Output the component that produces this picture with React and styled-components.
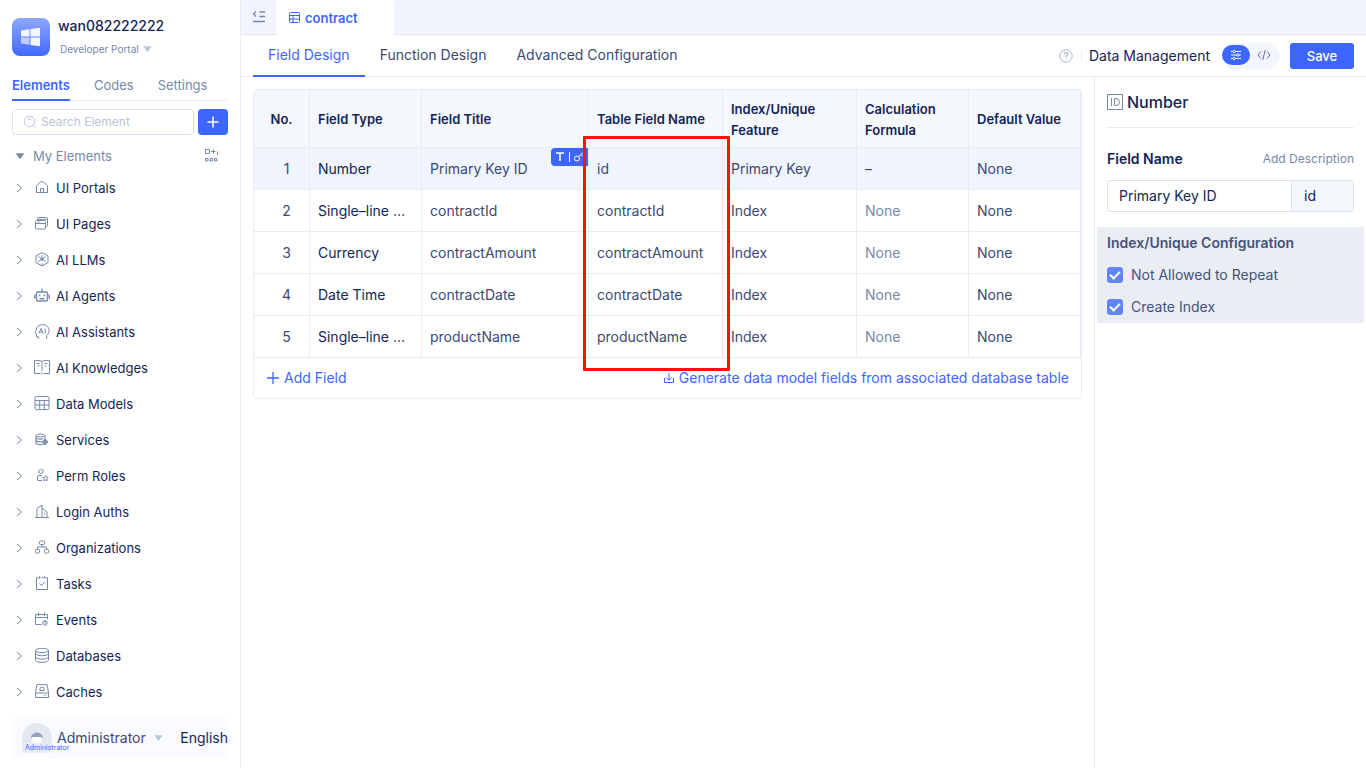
import React from "react";
import styled, { createGlobalStyle } from "styled-components";

const c = {
  brand: "#3d66ff",
  ink: "#142554",
  text: "#3b4a70",
  muted: "#7789aa",
  faint: "#b9c4d9",
  line: "#e9ecf5",
  field: "#d9e0ef",
  tint: "#f2f5fd",
};

const Global = createGlobalStyle`
  * { box-sizing: border-box; }
  body { margin: 0; background: #fff; color: ${c.ink}; font: 14px/20px Inter, "Liberation Sans", sans-serif; }
  button, input { font: inherit; color: inherit; }
  button { margin: 0; padding: 0; border: 0; background: none; }
  svg { display: block; flex: none; }
`;

const Page = styled.div`
  display: flex;
  min-height: 100vh;
`;

/* sidebar */
const Sidebar = styled.aside`
  width: 241px;
  flex: none;
  display: flex;
  flex-direction: column;
  padding: 16px 12px 10px;
  border-right: 1px solid ${c.line};
`;
const Workspace = styled.header`
  display: flex;
  gap: 8px;
  height: 54px;
`;
const Logo = styled.div`
  width: 38px;
  height: 38px;
  margin-top: 2px;
  border-radius: 8px;
  background: linear-gradient(#8fa8ff, #3f68ff);
  display: grid;
  place-items: center;
`;
const WorkspaceName = styled.h1`
  margin: 0;
  font-size: 14px;
  line-height: 20px;
  font-weight: 500;
`;
const PortalButton = styled.button`
  display: flex;
  align-items: center;
  gap: 4px;
  margin-top: 5px;
  padding-left: 2px;
  font-size: 10px;
  line-height: 16px;
  color: ${c.muted};
`;
const SideTabs = styled.nav`
  display: flex;
  gap: 24px;
  border-bottom: 1px solid ${c.line};
`;
const SideTab = styled.button`
  height: 31px;
  margin-bottom: -1px;
  font-size: 13px;
  line-height: 20px;
  padding-top: 1px;
  font-weight: ${(p) => (p.$active ? 600 : 400)};
  color: ${(p) => (p.$active ? c.brand : c.muted)};
  border-bottom: 2px solid ${(p) => (p.$active ? c.brand : "transparent")};
`;
const SearchRow = styled.div`
  display: flex;
  gap: 4px;
  margin-top: 8px;
`;
const SearchBox = styled.label`
  flex: 1;
  min-width: 0;
  height: 26px;
  display: flex;
  align-items: center;
  gap: 4px;
  padding: 0 10px;
  border: 1px solid ${c.field};
  border-radius: 4px;
  color: ${c.faint};
`;
const SearchInput = styled.input`
  min-width: 0;
  flex: 1;
  padding: 0;
  border: 0;
  outline: 0;
  font-size: 12px;
  &::placeholder { color: ${c.faint}; opacity: 1; }
`;
const AddButton = styled.button`
  width: 30px;
  height: 26px;
  border-radius: 4px;
  background: ${c.brand};
  color: #fff;
  display: grid;
  place-items: center;
`;
const GroupRow = styled.div`
  display: flex;
  align-items: center;
  justify-content: space-between;
  height: 35px;
  padding: 6px 10px 0 3px;
  color: ${c.muted};
`;
const GroupButton = styled.button`
  display: flex;
  align-items: center;
  gap: 8px;
  font-size: 13px;
`;
const ItemList = styled.ul`
  list-style: none;
  margin: 0;
  padding: 0;
  flex: 1;
`;
const Item = styled.button`
  width: 100%;
  height: 36px;
  display: flex;
  align-items: center;
  gap: 6px;
  font-size: 13px;
  & > svg { color: ${c.muted}; }
`;
const Account = styled.footer`
  display: flex;
  align-items: center;
  height: 40px;
  padding-left: 10px;
  border-radius: 4px;
  background: #fafbfe;
`;
const Avatar = styled.div`
  position: relative;
  width: 30px;
  height: 30px;
  border-radius: 50%;
  background: #e4e9f1;
  display: grid;
  place-items: center;
`;
const AvatarTag = styled.span`
  position: absolute;
  left: 0;
  bottom: 0;
  width: 30px;
  padding-left: 3px;
  border-radius: 4px;
  background: #e6ebff;
  color: ${c.brand};
  font-size: 7px;
  line-height: 10px;
`;
const AccountButton = styled.button`
  display: flex;
  align-items: center;
  gap: 8px;
  margin-left: 5px;
  color: ${c.text};
`;
const LanguageButton = styled.button`
  margin-left: auto;
`;

/* workspace area */
const Main = styled.div`
  flex: 1;
  min-width: 0;
  display: flex;
  flex-direction: column;
`;
const FileBar = styled.div`
  display: flex;
  height: 35px;
  background: ${c.tint};
  border-bottom: 1px solid #e2e7f5;
`;
const CollapseButton = styled.button`
  width: 35px;
  display: grid;
  place-items: center;
  color: ${c.muted};
`;
const FileTab = styled.button`
  width: 118px;
  height: 35px;
  display: flex;
  align-items: center;
  gap: 4px;
  padding-left: 12px;
  border-radius: 4px 4px 0 0;
  background: #fff;
  color: ${c.brand};
  font-size: 13px;
  font-weight: 600;
`;
const ToolBar = styled.div`
  display: flex;
  align-items: center;
  height: 42px;
  padding: 0 12px;
  border-bottom: 1px solid ${c.line};
`;
const ToolTab = styled.button`
  height: 42px;
  padding: 0 15px;
  color: ${(p) => (p.$active ? c.brand : c.text)};
  border-bottom: 2px solid ${(p) => (p.$active ? c.brand : "transparent")};
`;
const Tools = styled.div`
  display: flex;
  align-items: center;
  margin-left: auto;
`;
const HelpButton = styled.button`
  color: #a7b3ca;
`;
const ToolLabel = styled.span`
  margin: 0 12px 0 8px;
  padding-left: 8px;
  background: linear-gradient(${c.line}, ${c.line}) left center / 1px 12px no-repeat;
`;
const ModeSwitch = styled.div`
  display: flex;
  width: 58px;
  height: 26px;
  border-radius: 13px;
  background: ${c.tint};
`;
const ModeButton = styled.button`
  width: 28px;
  height: 20px;
  margin-top: 2px;
  border-radius: 10px;
  display: grid;
  place-items: center;
  background: ${(p) => (p.$active ? c.brand : "transparent")};
  color: ${(p) => (p.$active ? "#fff" : "#5f7094")};
`;
const SaveButton = styled.button`
  width: 64px;
  height: 26px;
  margin-left: 10px;
  border-radius: 3px;
  background: ${c.brand};
  color: #fff;
  font-size: 13px;
  font-weight: 500;
`;
const Body = styled.div`
  flex: 1;
  display: flex;
`;
const Content = styled.main`
  flex: 1;
  min-width: 0;
  padding: 12px;
`;

/* field table */
const Card = styled.section`
  border: 1px solid ${c.line};
  border-radius: 4px;
`;
const Table = styled.table`
  width: 100%;
  table-layout: fixed;
  border-collapse: separate;
  border-spacing: 0;
`;
const Col = styled.col`
  width: ${(p) => (p.$w ? `${p.$w}px` : "auto")};
`;
const Th = styled.th`
  position: relative;
  height: 58px;
  padding: 2px 8px 0;
  text-align: ${(p) => (p.$center ? "center" : "left")};
  font-size: 13px;
  line-height: 21px;
  font-weight: 600;
  background: #f4f7fc;
  border-right: 1px solid ${c.line};
  border-bottom: 1px solid ${c.line};
`;
const Td = styled.td`
  position: relative;
  height: 42px;
  padding: ${(p) => (p.$number ? "0 0 0 10px" : "0 8px")};
  text-align: ${(p) => (p.$number ? "center" : "left")};
  white-space: nowrap;
  overflow: hidden;
  text-overflow: ellipsis;
  color: ${c.text};
  border-right: 1px solid ${c.line};
  border-bottom: 1px solid ${c.line};
`;
const TypeTd = styled(Td)`
  padding-right: 12px;
  color: ${c.ink};
`;
const FormulaTd = styled(Td)`
  color: ${(p) => (p.$empty ? c.text : c.muted)};
`;
const Row = styled.tr`
  background: ${(p) => (p.$selected ? "#f0f4ff" : "#fff")};
`;
const KeyBadge = styled.span`
  position: absolute;
  top: 0;
  right: 0;
  width: 37px;
  height: 18px;
  border-radius: 4px 0 0 4px;
  background: ${c.brand};
  display: grid;
  place-items: center;
`;
const Highlight = styled.div`
  position: absolute;
  z-index: 2;
  top: 46px;
  left: -6px;
  right: -8px;
  height: 235px;
  border: 3px solid #ff1205;
  border-radius: 1px;
  pointer-events: none;
`;
const TableFooter = styled.div`
  display: flex;
  justify-content: space-between;
  height: 40px;
  padding: 0 12px;
`;
const LinkButton = styled.button`
  display: flex;
  align-items: center;
  gap: 4px;
  color: ${c.brand};
`;

/* properties */
const Panel = styled.aside`
  width: 272px;
  flex: none;
  padding: 0 2px;
  border-left: 1px solid ${c.line};
`;
const PanelTitle = styled.h2`
  display: flex;
  align-items: center;
  gap: 4px;
  height: 51px;
  margin: 0 10px;
  font-size: 16px;
  font-weight: 500;
  border-bottom: 1px solid ${c.line};
  & > svg { color: ${c.muted}; }
`;
const PanelHead = styled.div`
  display: flex;
  align-items: center;
  justify-content: space-between;
  margin: 21px 10px 11px;
`;
const FieldLabel = styled.label`
  font-weight: 600;
`;
const DescriptionLink = styled.button`
  font-size: 12px;
  color: ${c.muted};
`;
const FieldInputs = styled.div`
  display: flex;
  height: 32px;
  margin: 0 10px 15px;
  border: 1px solid ${c.field};
  border-radius: 3px;
  overflow: hidden;
`;
const NameInput = styled.input`
  flex: 1;
  min-width: 0;
  padding: 0 11px;
  border: 0;
  outline: 0;
`;
const CodeInput = styled.input`
  width: 62px;
  padding: 0 12px;
  border: 0;
  border-left: 1px solid ${c.field};
  outline: 0;
  background: #f4f7fc;
`;
const IndexBox = styled.fieldset`
  min-width: 0;
  margin: 0;
  padding: 0 10px;
  border: 0;
  background: #eaedf3;
  color: #44547c;
`;
const IndexTitle = styled.legend`
  float: left;
  width: 100%;
  padding: 0;
  line-height: 32px;
  font-weight: 600;
`;
const CheckLabel = styled.label`
  clear: both;
  display: flex;
  align-items: center;
  gap: 8px;
  height: 32px;
`;
const Checkbox = styled.input`
  appearance: none;
  width: 16px;
  height: 16px;
  margin: 0;
  border-radius: 3px;
  border: 1px solid ${c.field};
  display: grid;
  place-items: center;
  &:checked { background: #6384f5; border-color: #6384f5; }
  &:checked::after {
    content: "";
    width: 8px;
    height: 4px;
    margin-bottom: 3px;
    border: solid #fff;
    border-width: 0 0 2px 2px;
    transform: rotate(-45deg);
  }
`;

const Svg = ({ w = 16, h = w, sw = 1, children }) => (
  <svg width={w} height={h} viewBox={`0 0 ${w} ${h}`} fill="none" stroke="currentColor" strokeWidth={sw} aria-hidden="true">
    {children}
  </svg>
);
const Caret = ({ color = "currentColor", w = 9 }) => (
  <svg width={w} height="6" viewBox="0 0 10 6" preserveAspectRatio="none" aria-hidden="true">
    <path d="M0.5 0.3h9L5.6 5.4q-.6.6-1.2 0z" fill={color} />
  </svg>
);

const items = [
  ["UI Portals", <><path d="M2.5 12.5V5.6L6.6 2q1.4-1 2.8 0l4.1 3.6v6.9z" /><path d="M6.5 12.5v-4h3v4" /></>],
  ["UI Pages", <><rect x="1.5" y="4.5" width="10" height="8.5" rx="1" /><path d="M1.5 7.5h10M3.5 4.5v-2q0-1 1-1h8q1 0 1 1v7q0 1-1 1h-1M4 3.3h9M3.5 6h2" /></>],
  ["AI LLMs", <><path d="M8 .6l6 3.3v6.7l-6 3.3-6-3.3V3.9z" /><path d="M8 3v4.2L4 9.7M8 7.2l4 2.5M4.3 4.5L8 7M11.7 4.5L8 7M8 14v-2.5" strokeWidth=".9" /><circle cx="8" cy="7.2" r="1.2" /></>],
  ["AI Agents", <><rect x="2.5" y="4" width="11" height="9" rx="1.5" strokeWidth="1.4" /><path d="M8 4V.8M.7 6.5v4M15.3 6.5v4M5.6 6.5v1.8M10.4 6.5v1.8M5.500 10.300q2.500 1 5 0" strokeWidth="1.4" /></>],
  ["AI Assistants", <><path d="M4.3 15v-2.3H2.5V10L.9 9l1.4-2.8C2.5 2.6 5 .6 8.3.6c4 0 6.8 2.5 6.8 6 0 2-1.2 3.6-2.5 4.9V15" /><path d="M4.8 9.5L7 4.5l2.2 5M5.5 8h3M11.2 4.5v5" /></>],
  ["AI Knowledges", <><path d="M6.5 13.5h-6V.6H6q1.500 0 2 1.200Q8.500.6 10 .6h5.500v12.900h-6M8 1.800v9M8 12.500v2M2.500 3.500h3M3.500 6h2M10.500 3.500h3M10.500 6h2" /></>],
  ["Data Models", <><rect x="1" y=".6" width="14" height="13" rx="1.2" /><path d="M1 4.500h14M1 9h14M5.700 4.500v9M10.300 4.500v9" /></>],
  ["Services", <><ellipse cx="6.500" cy="3.500" rx="4.500" ry="1.500" /><path d="M2 3.500v8q4 2 7 .8M11 3.500v3M2 6.200q4 1.600 7 .6M2 8.900q3 1.300 5.500.7" strokeWidth="1.200" /><path d="M11 7.300l2.600 2.600-2.600 2.600-2.600-2.600z" strokeWidth="1.300" /><circle cx="11" cy="9.900" r=".8" fill="currentColor" /></>],
  ["Perm Roles", <><rect x="5" y="1.500" width="4" height="4" rx="1.500" /><path d="M8 7.500H5q-1.500 0-1.500 1.500v3q0 .5.5.5h4" /><path d="M11.500 7.500l.9 1.700 1.800.3-1.300 1.300.3 1.900-1.700-.8-1.700.8.3-1.900-1.300-1.300 1.800-.3z" /></>],
  ["Login Auths", <><path d="M1 13.500h14M3 13.500V4.500L8 1v12.500M8 4l5 4v5.500" /><path d="M10.500 9v1.500" /></>],
  ["Organizations", <><rect x="5.500" y="1" width="5" height="3.500" rx=".8" /><rect x="1.500" y="9.500" width="4" height="3.500" rx=".8" /><rect x="10.500" y="9.500" width="4" height="3.500" rx=".8" /><path d="M8 4.500V7M3.500 9.500V7h9v2.500" /></>],
  ["Tasks", <><path d="M5 1.800H2.500v11.700h11V1.800H11M5.700 0v3M7.500 1.800h2.800V0" /><path d="M5.500 7.500l2 2 3.500-3.700" /></>],
  ["Events", <><path d="M7.500 12.500h-6v-10h12V7M1.500 5.500h12M4.500.5v3.500M10.500.5v3.500" /><circle cx="11" cy="11" r="2.200" /><path d="M11 11V8.200M11 11h1" /></>],
  ["Databases", <><ellipse cx="8" cy="2.500" rx="6.500" ry="2.200" /><path d="M1.500 2.500v9.800q1.500 2.200 6.500 2.200t6.500-2.200V2.500M1.500 5.800q1.500 2 6.500 2t6.500-2M1.500 9.200q1.500 2 6.500 2t6.500-2" /></>],
  ["Caches", <><path d="M1.500 8.500L3 .6h10l1.500 7.900v5h-13zM1.500 9h13M9.500 11.200h1M11.800 11.200h1" /><path d="M5.500 6.500h5M6 6q-.8-3 2-3t2 3" /></>],
];

const columns = [
  ["No.", 56],
  ["Field Type", 112],
  ["Field Title"],
  ["Table Field Name", 134],
  ["Index/Unique Feature", 134],
  ["Calculation Formula", 112],
  ["Default Value", 112],
];

const fields = [
  ["Number", "Primary Key ID", "id", "Primary Key", "–"],
  ["Single–line Text", "contractId", "contractId", "Index", "None"],
  ["Currency", "contractAmount", "contractAmount", "Index", "None"],
  ["Date Time", "contractDate", "contractDate", "Index", "None"],
  ["Single–line Text", "productName", "productName", "Index", "None"],
];

function SideBar() {
  return (
    <Sidebar>
      <Workspace>
        <Logo>
          <svg width="20" height="20" viewBox="0 0 20 20" fill="#fff" aria-hidden="true">
            <path d="M0 3.500l8.500-1.200v7.200H0zM9.500 2.100L19 .7v8.800H9.500zM9.500 10.500H19v8.800l-9.500-1.400z" opacity=".93" />
            <path d="M0 10.500h8.500v7.200L0 16.500z" opacity=".6" />
          </svg>
        </Logo>
        <div>
          <WorkspaceName>wan082222222</WorkspaceName>
          <PortalButton>Developer Portal<Caret color="#bcc7da" /></PortalButton>
        </div>
      </Workspace>
      <SideTabs>
        <SideTab $active>Elements</SideTab>
        <SideTab>Codes</SideTab>
        <SideTab>Settings</SideTab>
      </SideTabs>
      <SearchRow>
        <SearchBox>
          <Svg w={14}><circle cx="6.500" cy="6.500" r="5.300" /><path d="M10.500 10.500l2.300 2.300M4.800 4.500q1.700-1.300 3.400 0" /></Svg>
          <SearchInput aria-label="Search Element" placeholder="Search Element" />
        </SearchBox>
        <AddButton aria-label="Add element"><Svg w={12} sw={1.5}><path d="M6 .5v11M.5 6h11" /></Svg></AddButton>
      </SearchRow>
      <GroupRow>
        <GroupButton><Caret w={10} />My Elements</GroupButton>
        <Svg w={13}><path d="M.5.5h4v4h-4zM6 2.500h4.500M8.500.5v4M12.500 2.500v3.500M.5 9.500h2.500v2.500H.5zM5 9.500h2.500v2.500H5zM9.500 9.500H12v2.500H9.500z" /></Svg>
      </GroupRow>
      <ItemList>
        {items.map(([name, icon]) => (
          <li key={name}>
            <Item>
              <Svg><path d="M5 4l4.500 4L5 12" /></Svg>
              <Svg>{icon}</Svg>
              {name}
            </Item>
          </li>
        ))}
      </ItemList>
      <Account>
        <Avatar>
          <svg width="14" height="12" viewBox="0 0 14 12" aria-hidden="true">
            <path d="M2 5h10v5q-5 4-10 0z" fill="#fff" />
            <path d="M1 6Q1 3 4 1.500 7-.5 10 1.500 13 3 13 6l-2-1H3z" fill="#93a2bd" />
          </svg>
          <AvatarTag>Administrator</AvatarTag>
        </Avatar>
        <AccountButton>Administrator<Caret color="#bcc7da" /></AccountButton>
        <LanguageButton>English</LanguageButton>
      </Account>
    </Sidebar>
  );
}

function FieldTable() {
  return (
    <Card>
      <Table>
        <colgroup>
          {columns.map(([name, w]) => <Col key={name} $w={w} />)}
        </colgroup>
        <thead>
          <tr>
            {columns.map(([name], i) => (
              <Th key={name} $center={i === 0}>
                {name}
                {i === 3 && <Highlight />}
              </Th>
            ))}
          </tr>
        </thead>
        <tbody>
          {fields.map(([type, title, column, index, formula], i) => (
            <Row key={column} $selected={i === 0}>
              <Td $number>{i + 1}</Td>
              <TypeTd>{type}</TypeTd>
              <Td>
                {title}
                {i === 0 && (
                  <KeyBadge>
                    <svg width="29" height="12" viewBox="0 0 29 12" fill="none" stroke="#fff" aria-hidden="true">
                      <path d="M1 2h8M5 2v8" strokeWidth="1.500" />
                      <path d="M14.500 1v10" />
                      <circle cx="22" cy="7.500" r="2.500" />
                      <path d="M24 5.500L28 1.500M26 3.500l2 2" />
                    </svg>
                  </KeyBadge>
                )}
              </Td>
              <Td>{column}</Td>
              <Td>{index}</Td>
              <FormulaTd $empty={formula === "–"}>{formula}</FormulaTd>
              <Td>None</Td>
            </Row>
          ))}
        </tbody>
      </Table>
      <TableFooter>
        <LinkButton><Svg w={14} sw={1.3}><path d="M7 1v12M1 7h12" /></Svg>Add Field</LinkButton>
        <LinkButton>
          <Svg w={12}><path d="M6 1v7M3 5.300l3 3 3-3M1.500 6v4.500h9V6" /></Svg>
          Generate data model fields from associated database table
        </LinkButton>
      </TableFooter>
    </Card>
  );
}

function Properties() {
  return (
    <Panel>
      <PanelTitle>
        <Svg><rect x=".5" y=".5" width="15" height="15" /><path d="M4.500 4v8M7.500 4.500v7H9q3.500 0 3.500-3.500T9 4.500z" /></Svg>
        Number
      </PanelTitle>
      <PanelHead>
        <FieldLabel htmlFor="field-name">Field Name</FieldLabel>
        <DescriptionLink>Add Description</DescriptionLink>
      </PanelHead>
      <FieldInputs>
        <NameInput id="field-name" defaultValue="Primary Key ID" />
        <CodeInput aria-label="Field code" defaultValue="id" />
      </FieldInputs>
      <IndexBox>
        <IndexTitle>Index/Unique Configuration</IndexTitle>
        <CheckLabel><Checkbox type="checkbox" defaultChecked />Not Allowed to Repeat</CheckLabel>
        <CheckLabel><Checkbox type="checkbox" defaultChecked />Create Index</CheckLabel>
      </IndexBox>
    </Panel>
  );
}

export default function App() {
  return (
    <Page>
      <Global />
      <SideBar />
      <Main>
        <FileBar>
          <CollapseButton aria-label="Collapse sidebar">
            <Svg w={14} sw={1.3}><path d="M4 1.500L1.500 4 4 6.500M7.500 2h5.500M7.500 6.500h5.500M1 11.500h12" /></Svg>
          </CollapseButton>
          <FileTab>
            <Svg w={13}><rect x="1.500" y="1.500" width="10" height="10" rx="1" /><path d="M1.500 4.500h10M1.500 8h10M5 4.500v7" /></Svg>
            contract
          </FileTab>
        </FileBar>
        <ToolBar>
          <ToolTab $active>Field Design</ToolTab>
          <ToolTab>Function Design</ToolTab>
          <ToolTab>Advanced Configuration</ToolTab>
          <Tools>
            <HelpButton aria-label="Help">
              <Svg w={14}><circle cx="7" cy="7" r="6.200" /><path d="M5.200 5.500q0-1.900 1.800-1.900t1.800 1.600Q8.800 6.300 7 7v1.300M7 9.500v1" strokeWidth="1.200" /></Svg>
            </HelpButton>
            <ToolLabel>Data Management</ToolLabel>
            <ModeSwitch>
              <ModeButton $active aria-label="Visual mode">
                <Svg w={12}><path d="M1 2.500h2M5.500 2.500H11M1 6h5.500M9 6h2M1 9.500h2M5.500 9.500H11" /><circle cx="4.200" cy="2.500" r="1.200" /><circle cx="7.800" cy="6" r="1.200" /><circle cx="4.200" cy="9.500" r="1.200" /></Svg>
              </ModeButton>
              <ModeButton aria-label="Code mode">
                <Svg w={14}><path d="M4 3.500L1 7l3 3.500M10 3.500L13 7l-3 3.500M8.300 2L5.700 12" /></Svg>
              </ModeButton>
            </ModeSwitch>
            <SaveButton>Save</SaveButton>
          </Tools>
        </ToolBar>
        <Body>
          <Content><FieldTable /></Content>
          <Properties />
        </Body>
      </Main>
    </Page>
  );
}
